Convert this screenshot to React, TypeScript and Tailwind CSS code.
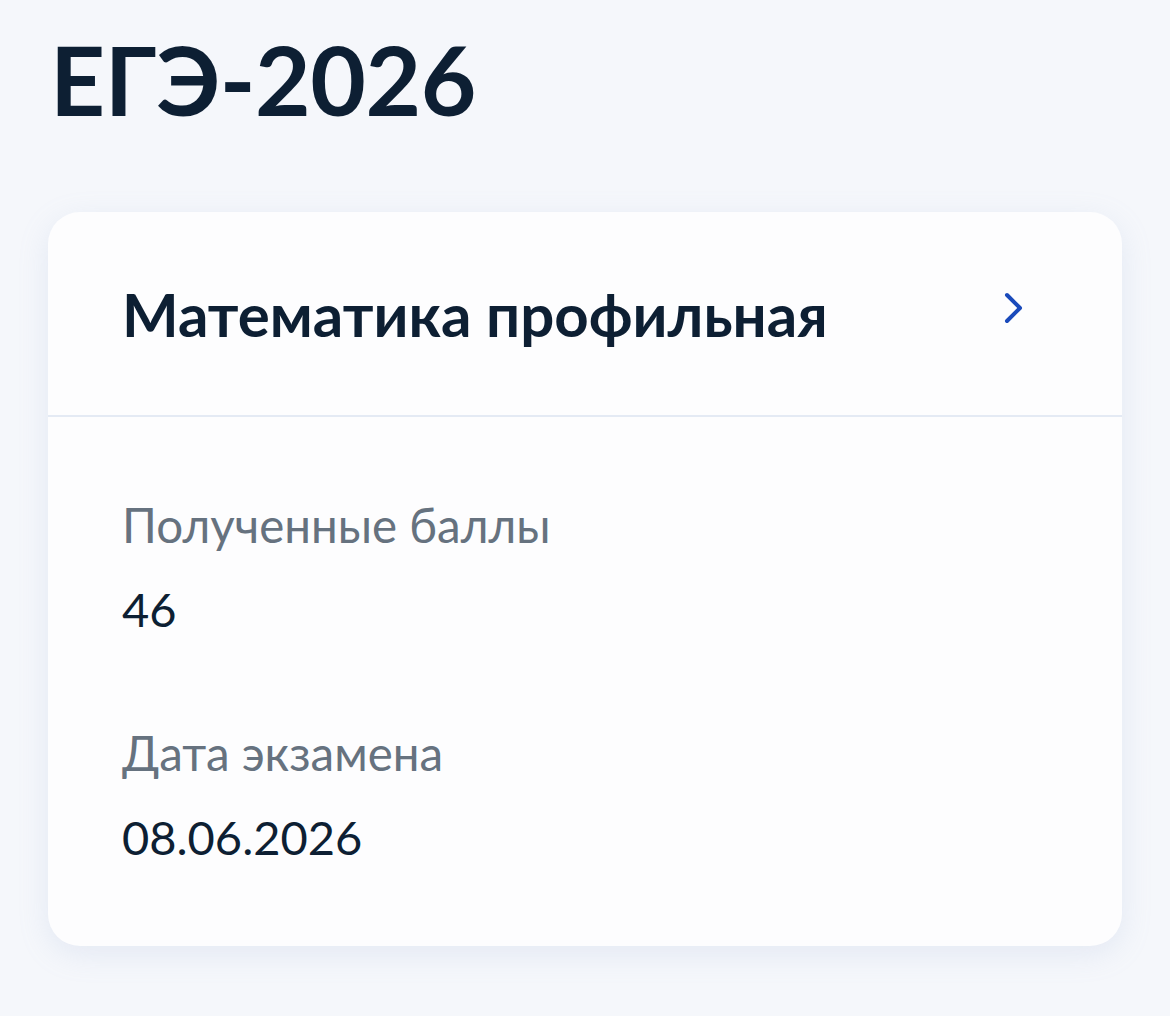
import * as React from "react";

const results = [
  { label: "Полученные баллы", value: "46" },
  { label: "Дата экзамена", value: "08.06.2026" },
];

const App = () => {
  return (
    <div
      className="min-h-screen bg-[#f5f7fb] px-[48px] pt-[31px] pb-[60px]"
      style={{ fontFamily: "Lato, 'Noto Sans', sans-serif" }}
    >
      <h1 className="pl-[2px] text-[96px] font-bold leading-none tracking-[-0.5px] text-[#0d1f33]">
        ЕГЭ-2026
      </h1>

      <div className="mt-[85px] w-[1074px] overflow-hidden rounded-[32px] bg-[#fdfdfe] shadow-[0_8px_30px_rgba(150,170,210,0.18)]">
        <div className="flex h-[205px] items-center justify-between border-b-2 border-[#e4eaf4] pl-[74px] pr-[98px]">
          <h2 className="text-[60px] font-bold leading-none text-[#0d1f33]">
            Математика профильная
          </h2>
          <svg width="20" height="32" viewBox="0 0 20 32" fill="none" className="-mt-[12px]">
            <polyline
              points="3,3 16,16 3,29"
              stroke="#1a4abb"
              strokeWidth="4"
              strokeLinecap="round"
              strokeLinejoin="round"
            />
          </svg>
        </div>

        <div className="flex flex-col gap-[89px] pl-[74px] pt-[81px] pb-[81px]">
          {results.map((item) => (
            <div key={item.label} className="flex flex-col gap-[29px]">
              <div className="text-[47.5px] leading-[54px] text-[#66727f]">{item.label}</div>
              <div className="text-[47px] leading-[56px] text-[#0d1f33]">{item.value}</div>
            </div>
          ))}
        </div>
      </div>
    </div>
  );
};

export default App;
